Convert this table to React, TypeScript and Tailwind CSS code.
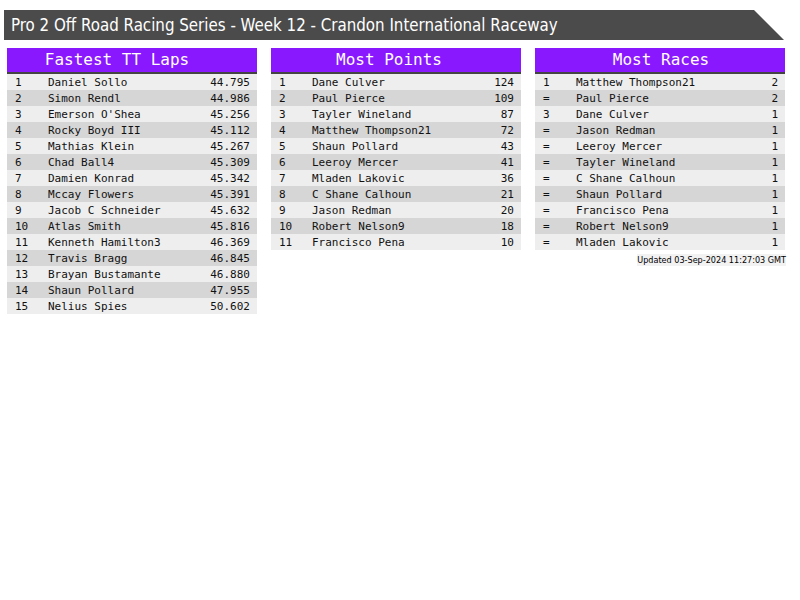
const laps = [
  ["1", "Daniel Sollo", "44.795"],
  ["2", "Simon Rendl", "44.986"],
  ["3", "Emerson O'Shea", "45.256"],
  ["4", "Rocky Boyd III", "45.112"],
  ["5", "Mathias Klein", "45.267"],
  ["6", "Chad Ball4", "45.309"],
  ["7", "Damien Konrad", "45.342"],
  ["8", "Mccay Flowers", "45.391"],
  ["9", "Jacob C Schneider", "45.632"],
  ["10", "Atlas Smith", "45.816"],
  ["11", "Kenneth Hamilton3", "46.369"],
  ["12", "Travis Bragg", "46.845"],
  ["13", "Brayan Bustamante", "46.880"],
  ["14", "Shaun Pollard", "47.955"],
  ["15", "Nelius Spies", "50.602"],
];

const points = [
  ["1", "Dane Culver", "124"],
  ["2", "Paul Pierce", "109"],
  ["3", "Tayler Wineland", "87"],
  ["4", "Matthew Thompson21", "72"],
  ["5", "Shaun Pollard", "43"],
  ["6", "Leeroy Mercer", "41"],
  ["7", "Mladen Lakovic", "36"],
  ["8", "C Shane Calhoun", "21"],
  ["9", "Jason Redman", "20"],
  ["10", "Robert Nelson9", "18"],
  ["11", "Francisco Pena", "10"],
];

const races = [
  ["1", "Matthew Thompson21", "2"],
  ["=", "Paul Pierce", "2"],
  ["3", "Dane Culver", "1"],
  ["=", "Jason Redman", "1"],
  ["=", "Leeroy Mercer", "1"],
  ["=", "Tayler Wineland", "1"],
  ["=", "C Shane Calhoun", "1"],
  ["=", "Shaun Pollard", "1"],
  ["=", "Francisco Pena", "1"],
  ["=", "Robert Nelson9", "1"],
  ["=", "Mladen Lakovic", "1"],
];

function Board({
  title,
  rows,
  headPad,
  footer,
}: {
  title: string;
  rows: string[][];
  headPad: string;
  footer?: string;
}) {
  return (
    <div className="w-[250px]">
      <div className={`h-[24px] bg-[#8a18ff] text-white text-[16px] leading-[24px] text-center ${headPad}`}>{title}</div>
      <div className="h-[2px] bg-[#444444]" />
      {rows.map((r, i) => (
        <div
          key={i}
          className={`flex h-[16px] items-center text-[11px] leading-[16px] pt-[1px] text-[#111] ${i % 2 ? "bg-[#d6d6d6]" : "bg-[#eeeeee]"}`}
        >
          <span className="w-[41px] pl-[8px]">{r[0]}</span>
          <span className="flex-1">{r[1]}</span>
          <span className="pr-[7px]">{r[2]}</span>
        </div>
      ))}
      {footer && (
        <div className="flex justify-end mt-[4px] -mr-[1px]">
          <span
            className="bg-[#f2f2f2] text-[9px] leading-[12px] text-black"
            style={{ fontFamily: '"DejaVu Sans", sans-serif', fontStretch: "condensed" }}
          >
            {footer}
          </span>
        </div>
      )}
    </div>
  );
}

export default function App() {
  return (
    <div className="w-[800px] h-[600px] bg-white pt-[10px] font-['DejaVu_Sans_Mono',monospace]">
      <div
        className="ml-[4px] w-[780px] h-[30px] bg-[#4b4b4b] text-white text-[16.75px] leading-[30px] pl-[7px] [clip-path:polygon(0_0,calc(100%-30px)_0,100%_100%,0_100%)]"
        style={{ fontFamily: '"DejaVu Sans", sans-serif', fontStretch: "condensed" }}
      >
        Pro 2 Off Road Racing Series - Week 12 - Crandon International Raceway
      </div>
      <div className="flex gap-[14px] ml-[7px] mt-[8px] items-start">
        <Board title="Fastest TT Laps" rows={laps} headPad="pr-[30px]" />
        <Board title="Most Points" rows={points} headPad="pr-[14px]" />
        <Board title="Most Races" rows={races} headPad="pl-[2px]" footer="Updated 03-Sep-2024 11:27:03 GMT" />
      </div>
    </div>
  );
}
